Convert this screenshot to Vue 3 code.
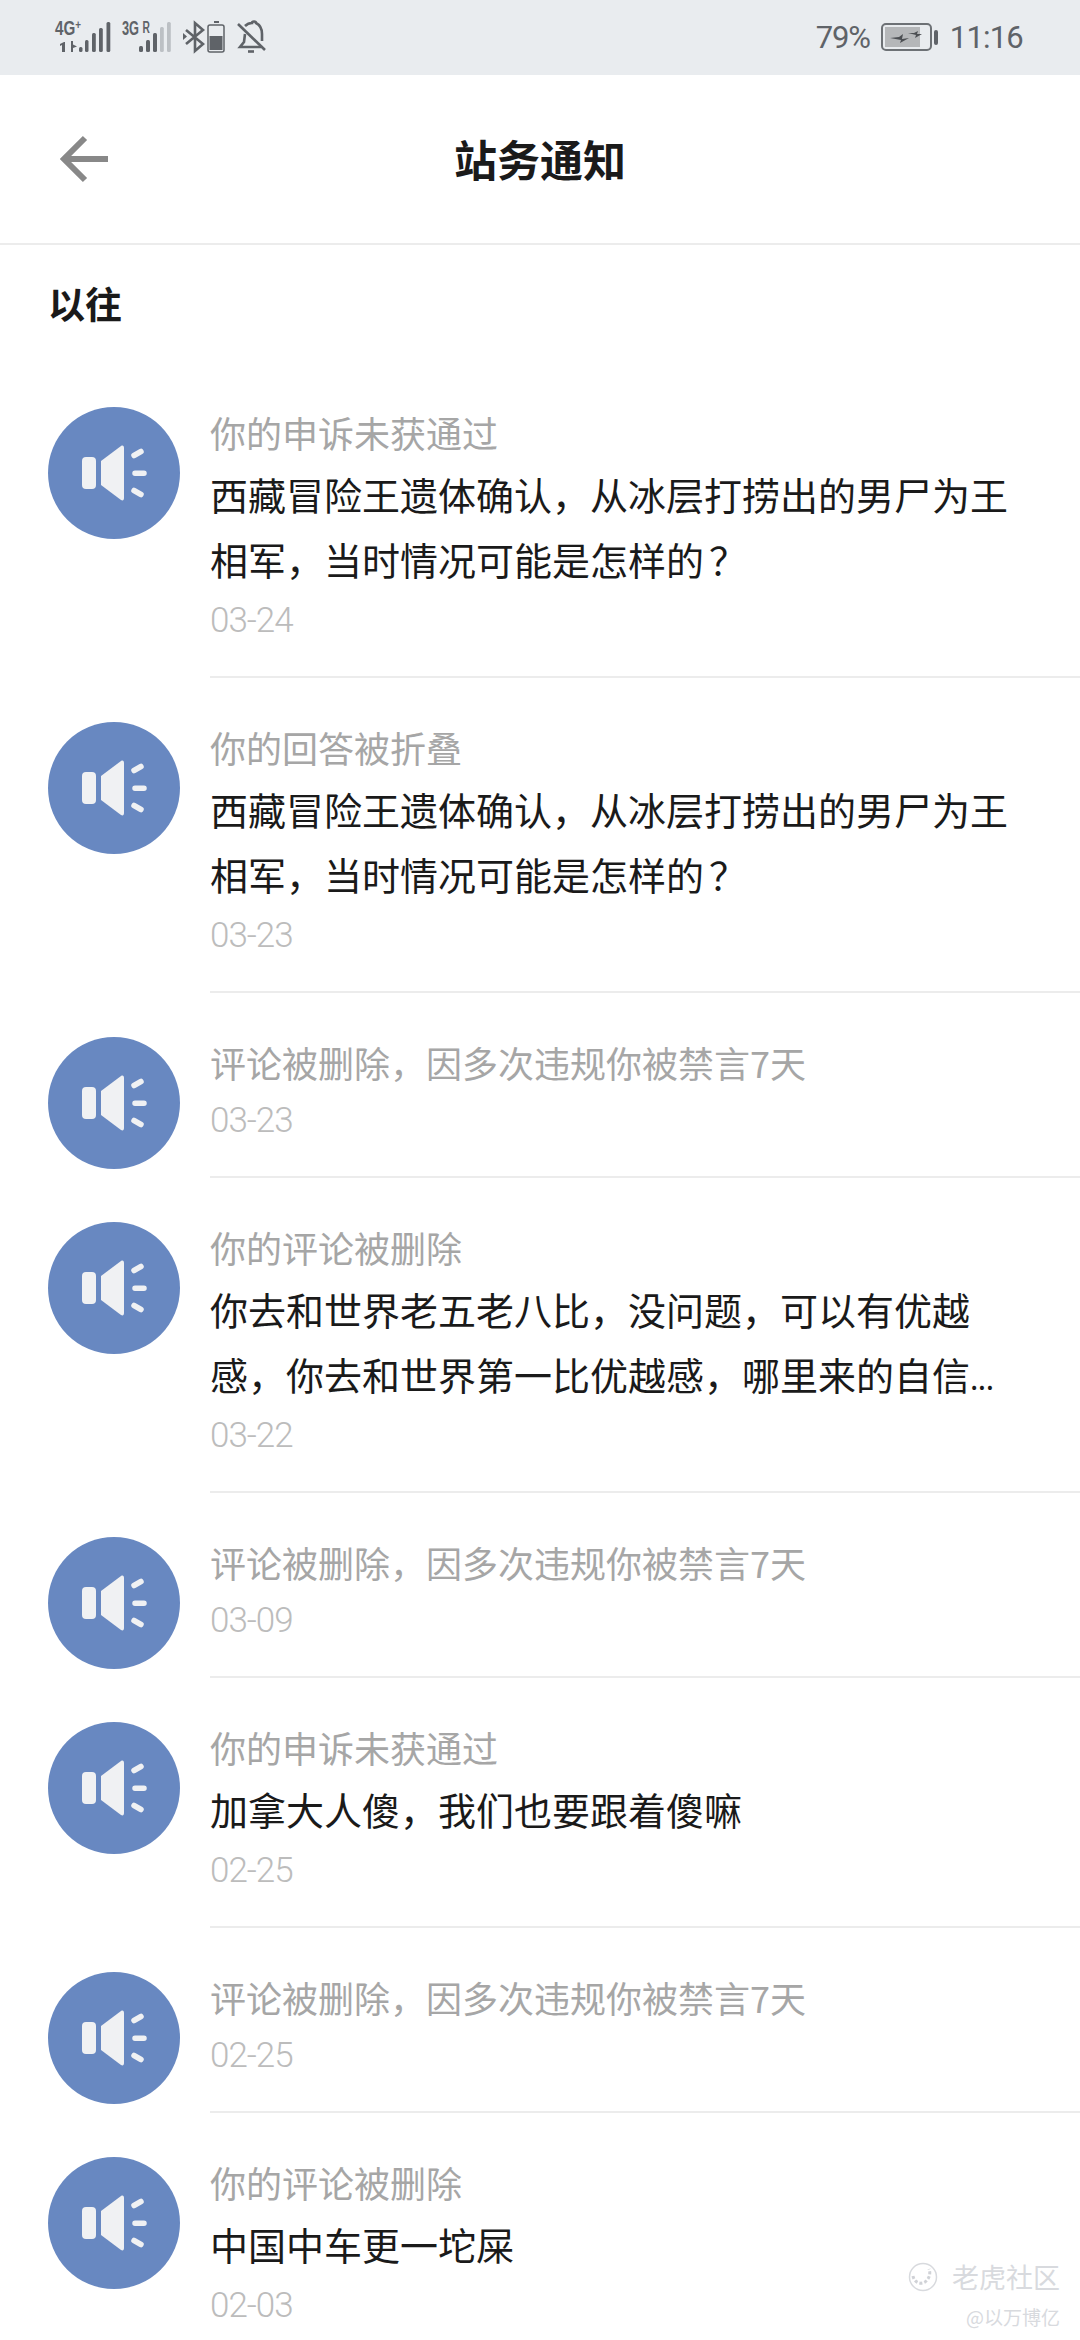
<script setup>
const items = [
  { title: '你的申诉未获通过', body: ['西藏冒险王遗体确认，从冰层打捞出的男尸为王', '相军，当时情况可能是怎样的？'], date: '03-24' },
  { title: '你的回答被折叠', body: ['西藏冒险王遗体确认，从冰层打捞出的男尸为王', '相军，当时情况可能是怎样的？'], date: '03-23' },
  { title: '评论被删除，因多次违规你被禁言7天', body: [], date: '03-23' },
  { title: '你的评论被删除', body: ['你去和世界老五老八比，没问题，可以有优越', '感，你去和世界第一比优越感，哪里来的自信...'], date: '03-22' },
  { title: '评论被删除，因多次违规你被禁言7天', body: [], date: '03-09' },
  { title: '你的申诉未获通过', body: ['加拿大人傻，我们也要跟着傻嘛'], date: '02-25' },
  { title: '评论被删除，因多次违规你被禁言7天', body: [], date: '02-25' },
  { title: '你的评论被删除', body: ['中国中车更一坨屎'], date: '02-03' }
]
const split = (line) => {
  const m = line.match(/^(.*?)(\.\.\.|？)?$/)
  return { text: m[1], tail: m[2] || '', cls: m[2] === '...' ? 'dots' : 'ask' }
}
</script>

<template>
  <div class="screen">
    <div class="status">
      <svg class="status-left" width="280" height="75" viewBox="0 0 280 75">
        <g fill="#5f6368">
          <text x="55" y="35" class="net" textLength="26" lengthAdjust="spacingAndGlyphs">4G<tspan class="plus" dy="-6">+</tspan></text>
          <path d="M62 52v-7l-2 1v-2l4-2h1v10zM71 41l0 11h2v-4l4-1.500-4-2v-3.500z" />
          <rect x="79" y="47" width="3.500" height="5" rx="1.500" />
          <rect x="85" y="40" width="3.500" height="12" rx="1.500" />
          <rect x="92" y="33" width="3.800" height="19" rx="1.500" />
          <rect x="99" y="28" width="3.800" height="24" rx="1.500" />
          <rect x="106.500" y="22" width="3.800" height="30" rx="1.500" />
          <text x="122" y="35" class="net" textLength="28" lengthAdjust="spacingAndGlyphs">3G <tspan class="small" dy="-2">R</tspan></text>
          <rect x="139" y="46" width="4" height="6" rx="1.500" />
          <rect x="146" y="40" width="4" height="12" rx="1.500" />
          <rect x="153" y="33" width="4" height="19" rx="1.500" />
          <rect x="160" y="27" width="3.800" height="25" rx="1.500" fill="#bcc0c4" />
          <rect x="167" y="22" width="3.800" height="30" rx="1.500" fill="#bcc0c4" />
          <path d="M183 33v7l4-3.500z" />
          <rect x="214" y="21" width="5" height="2" />
          <rect x="209.500" y="36" width="13" height="14" />
        </g>
        <path d="M186 30l17 14-8 7V23l8 7-17 14" fill="none" stroke="#5f6368" stroke-width="2.600" />
        <rect x="208" y="25" width="16" height="27" rx="2" fill="none" stroke="#5f6368" stroke-width="1.500" />
        <g fill="none" stroke="#5f6368" stroke-width="2.600">
          <path d="M238 24l27 26" />
          <path d="M245 34l-1 8-4 5h21" />
          <path d="M245 26c3-3 5-3 7-3 0-1 1-1.500 2-1.500s2 .5 2 1.500c4 2 6 6 6 11v7" />
          <path d="M248 51.500h6" />
        </g>
      </svg>
      <div class="status-right">
        <span class="pct">79%</span>
        <svg width="58" height="30" viewBox="0 0 58 30">
          <rect x="1" y="1" width="49" height="26" rx="4" fill="none" stroke="#6d7175" stroke-width="2" />
          <rect x="4" y="4" width="35" height="20" fill="#b5b7b9" />
          <rect x="53" y="7" width="4" height="15" rx="2" fill="#5f6368" />
          <path d="M9 15l9-1 4-3-1 5 7-1-9 5 1-3zM27 10l6 0 4-2-1 3 5 0-7 4 1-3z" fill="#4c4f53" />
        </svg>
        <span class="time">11:16</span>
      </div>
    </div>

    <header class="bar">
      <svg class="back" width="48" height="48" viewBox="0 0 48 48">
        <path d="M48 24H5M25 3L4 24l21 21" fill="none" stroke="#888888" stroke-width="6" />
      </svg>
      <h1>站务通知</h1>
    </header>

    <h2 class="section">以往</h2>

    <ul class="list">
      <li v-for="(item, i) in items" :key="i" class="item">
        <svg class="avatar" width="132" height="132" viewBox="0 0 132 132">
          <circle cx="66" cy="66" r="66" fill="#6888c1" />
          <rect x="34" y="50" width="14" height="32" rx="4" fill="#f0f1f3" />
          <path d="M53 54l20-15c2-1 3 0 3 2v50c0 2-1 3-3 2L53 78z" fill="#f0f1f3" />
          <path d="M86 48.500l7-4M87 66.300h9M86 83.500l7 4" stroke="#f0f1f3" stroke-width="5.500" stroke-linecap="round" fill="none" />
        </svg>
        <div class="content">
          <div class="title">{{ item.title }}</div>
          <div v-if="item.body.length" class="body">
            <div v-for="line in item.body" :key="line">{{ split(line).text }}<span v-if="split(line).tail" :class="split(line).cls">{{ split(line).tail }}</span></div>
          </div>
          <div class="date">{{ item.date }}</div>
        </div>
      </li>
    </ul>

    <div class="watermark">
      <div class="wm-top">
        <svg width="30" height="30" viewBox="0 0 30 30">
          <circle cx="15" cy="15" r="13.500" fill="none" stroke="#d8dade" stroke-width="1.500" />
          <path d="M5 14c1 6 7 9 12 6 4-3 6-8 4-13" fill="none" stroke="#d0d2d7" stroke-width="3" stroke-dasharray="3 2" />
        </svg>
        <span>老虎社区</span>
      </div>
      <div class="wm-sub">@以万博亿</div>
    </div>
  </div>
</template>

<style>
html, body { margin: 0; background: #fff; }
</style>

<style scoped>
.screen {
  position: relative;
  width: 1080px;
  height: 2340px;
  overflow: hidden;
  background: #fff;
  font-family: "Noto Sans CJK SC", "Noto Sans", sans-serif;
}
.status {
  height: 75px;
  background: #e9ecef;
  display: flex;
  justify-content: space-between;
  align-items: center;
  color: #5f6368;
}
.status-left { display: block; }
.status-right {
  display: flex;
  align-items: center;
  margin-right: 57px;
  font-family: Roboto, sans-serif;
  font-weight: 400;
  font-size: 31px;
}
.status-right svg { margin: 0 11px; }
.pct { letter-spacing: -1.2px; }
.time { letter-spacing: -0.8px; }
.net { font-family: "Liberation Sans", sans-serif; font-weight: 700; font-size: 20px; }
.small { font-size: 16px; }
.plus { font-size: 13px; }
.bar {
  height: 168px;
  border-bottom: 2px solid #ececec;
  display: flex;
  align-items: center;
  justify-content: center;
  position: relative;
}
.back { position: absolute; left: 60px; top: 60px; }
.bar h1 {
  margin: 0 0 2px;
  font-size: 43px;
  font-weight: 700;
  color: #1a1a1a;
}
.section {
  margin: 0;
  height: 118px;
  padding: 33px 0 0 48px;
  box-sizing: border-box;
  font-size: 37px;
  line-height: 50px;
  font-weight: 700;
  color: #1a1a1a;
}
.list { list-style: none; margin: 0; padding: 0; }
.item {
  display: flex;
  align-items: flex-start;
  padding-left: 48px;
}
.avatar { flex: none; margin-top: 44px; }
.content {
  flex: 1;
  margin-left: 30px;
  padding: 44px 0 34px;
  border-bottom: 2px solid #ececec;
  min-width: 0;
}
.title {
  font-size: 36px;
  line-height: 50px;
  color: #a6a6a6;
}
.body {
  margin: 4px 0 -4px;
  font-size: 38px;
  line-height: 65px;
  color: #1a1a1a;
  white-space: nowrap;
}
.ask { margin-left: 5px; }
.dots { font-size: 30px; letter-spacing: -0.5px; line-height: 0; }
.date {
  margin-top: 13px;
  font-family: Roboto, sans-serif;
  font-size: 35px;
  font-weight: 300;
  letter-spacing: -1px;
  line-height: 42px;
  color: #bcbcbc;
}
.watermark {
  position: absolute;
  right: 20px;
  bottom: 10px;
  text-align: right;
  color: #d8dade;
}
.wm-top {
  display: flex;
  align-items: center;
  justify-content: flex-end;
  gap: 14px;
  font-size: 27px;
  line-height: 34px;
}
.wm-sub { font-size: 19px; line-height: 26px; margin-top: 10px; }
</style>
